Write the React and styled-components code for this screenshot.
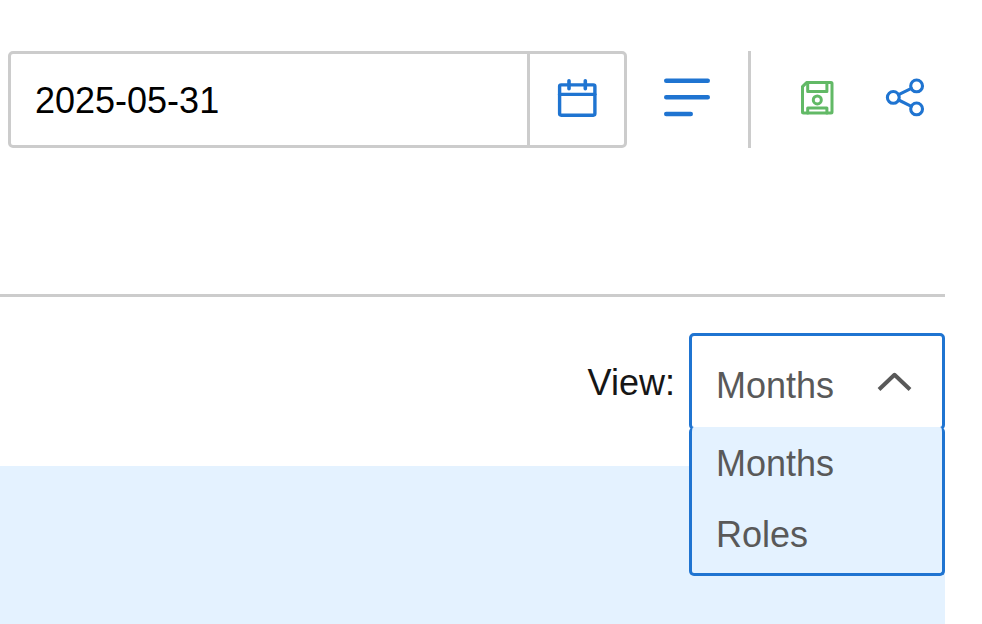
import React, { useState } from "react";
import styled, { createGlobalStyle } from "styled-components";

const views = ["Months", "Roles"];

const CalendarIcon = () => (
  <Icon viewBox="0 0 48 47" aria-hidden="true">
    <rect x="6.6" y="8.9" width="35.3" height="30.3" rx="1.6" strokeWidth="3.4" />
    <path d="M6.6 18.3H41.9" strokeWidth="3.2" />
    <path d="M16 4.7V12.7M32.3 4.7V12.7" strokeWidth="3.6" />
  </Icon>
);

const LinesIcon = () => (
  <Icon viewBox="0 0 48 47" aria-hidden="true">
    <path d="M3.2 4.7H44.8M3.2 21.3H44.8M3.2 38H27.8" strokeWidth="4.4" />
  </Icon>
);

const SaveIcon = () => (
  <Icon viewBox="0 0 48 47" aria-hidden="true">
    <g strokeWidth="3">
      <path d="M13.6 6.6H38Q39 6.6 39 7.6V35.9Q39 36.9 38 36.9H10.5Q9.5 36.9 9.5 35.9V10.6Z" />
      <path d="M14.7 6.6V15.6H33.9V6.6" />
      <path d="M14.7 36.9V32.1H33.9V36.9" />
      <circle cx="24.3" cy="23.9" r="4" />
    </g>
  </Icon>
);

const ShareIcon = () => (
  <Icon viewBox="0 0 48 47" aria-hidden="true">
    <g strokeWidth="3.1">
      <circle cx="12.3" cy="21.4" r="5.9" />
      <circle cx="35.6" cy="9.9" r="5.9" />
      <circle cx="35.6" cy="32.9" r="5.9" />
      <path d="M17.6 18.7L30.4 12.4M17.6 24L30.4 30.3" />
    </g>
  </Icon>
);

const App = () => {
  const [date, setDate] = useState("2025-05-31");
  const [view, setView] = useState("Months");
  const [open, setOpen] = useState(true);

  const toggle = (e) => {
    e.preventDefault();
    setOpen(!open);
  };

  const choose = (name) => {
    setView(name);
    setOpen(false);
  };

  return (
    <Page>
      <GlobalStyle />
      <Toolbar>
        <DateField>
          <DateInput
            type="text"
            aria-label="Date"
            value={date}
            onChange={(e) => setDate(e.target.value)}
          />
          <DateButton type="button" aria-label="Open calendar">
            <CalendarIcon />
          </DateButton>
        </DateField>
        <Actions>
          <IconButton type="button" aria-label="Details">
            <LinesIcon />
          </IconButton>
          <Divider />
          <IconButton type="button" aria-label="Save" $color="#62b966">
            <SaveIcon />
          </IconButton>
          <IconButton type="button" aria-label="Share">
            <ShareIcon />
          </IconButton>
        </Actions>
      </Toolbar>
      <ViewRow>
        <ViewLabel htmlFor="view">View:</ViewLabel>
        <Dropdown>
          <Select
            id="view"
            value={view}
            onMouseDown={toggle}
            onChange={(e) => choose(e.target.value)}
          >
            {views.map((name) => (
              <option key={name}>{name}</option>
            ))}
          </Select>
          <Chevron viewBox="0 0 36 22" $open={open} aria-hidden="true">
            <path d="M2 18.5L17.5 3.8L33 18.5" />
          </Chevron>
          {open && (
            <Menu>
              {views.map((name) => (
                <li key={name}>
                  <MenuItem type="button" onClick={() => choose(name)}>
                    {name}
                  </MenuItem>
                </li>
              ))}
            </Menu>
          )}
        </Dropdown>
      </ViewRow>
      <Panel />
    </Page>
  );
};

export default App;

const GlobalStyle = createGlobalStyle`
  * {
    box-sizing: border-box;
  }
  body {
    margin: 0;
    background-color: #fff;
  }
  body, button, input, select {
    font-family: "Liberation Sans", Arial, sans-serif;
    font-size: 36px;
  }
`;

const Page = styled.div`
  display: flex;
  flex-direction: column;
  min-height: 100vh;
  padding-right: 37px;
`;

const Toolbar = styled.header`
  display: flex;
  gap: 20px;
  padding: 51px 0 146px 8px;
  border-bottom: 3px solid #ccc;
`;

const DateField = styled.div`
  display: flex;
  flex: 1;
  min-width: 0;
  height: 97px;
  border: 3px solid #ccc;
  border-radius: 5px;
`;

const DateInput = styled.input`
  flex: 1;
  min-width: 0;
  padding: 2px 24px 0;
  border: none;
  background: none;
  color: #000;
  outline: none;
`;

const DateButton = styled.button`
  display: flex;
  align-items: center;
  justify-content: center;
  width: 97px;
  padding: 0;
  border: none;
  border-left: 3px solid #ccc;
  background: none;
  color: #1f74d1;
  cursor: pointer;
`;

const Actions = styled.div`
  display: flex;
  height: 97px;
`;

const IconButton = styled.button`
  display: flex;
  align-items: center;
  justify-content: center;
  width: 80px;
  padding: 0;
  border: none;
  background: none;
  color: ${(props) => props.$color || "#1f74d1"};
  cursor: pointer;

  & + & {
    margin-left: 8px;
  }
`;

const Divider = styled.div`
  width: 3px;
  margin: 0 26px 0 21px;
  background-color: #ccc;
`;

const Icon = styled.svg`
  width: 48px;
  height: 47px;
  fill: none;
  stroke: currentColor;
  stroke-linecap: round;
  stroke-linejoin: round;
`;

const ViewRow = styled.div`
  display: flex;
  justify-content: flex-end;
  gap: 14px;
  padding: 36px 0 34px;
`;

const ViewLabel = styled.label`
  line-height: 99px;
  color: #161616;
`;

const Dropdown = styled.div`
  position: relative;
  width: 256px;
`;

const Select = styled.select`
  display: block;
  appearance: none;
  width: 100%;
  height: 97px;
  padding: 8px 24px 0;
  border: 3px solid #1f74d1;
  border-radius: 5px;
  background-color: #fff;
  color: #595959;
  outline: none;
`;

const Chevron = styled.svg`
  position: absolute;
  top: 38px;
  right: 32px;
  width: 36px;
  height: 22px;
  fill: none;
  stroke: #595959;
  stroke-width: 4;
  stroke-linejoin: round;
  pointer-events: none;
  transform: ${(props) => (props.$open ? "none" : "rotate(180deg)")};
`;

const Menu = styled.ul`
  position: absolute;
  top: 94px;
  left: 0;
  right: 0;
  z-index: 1;
  margin: 0;
  padding: 1px 0 3px;
  list-style: none;
  border: 3px solid #1f74d1;
  border-top: none;
  border-radius: 5px;
  background-color: #e4f2ff;
`;

const MenuItem = styled.button`
  display: block;
  width: 100%;
  height: 71px;
  padding: 0 24px;
  border: none;
  background: none;
  color: #595959;
  text-align: left;
  cursor: pointer;
`;

const Panel = styled.main`
  flex: 1;
  background-color: #e4f2ff;
`;
